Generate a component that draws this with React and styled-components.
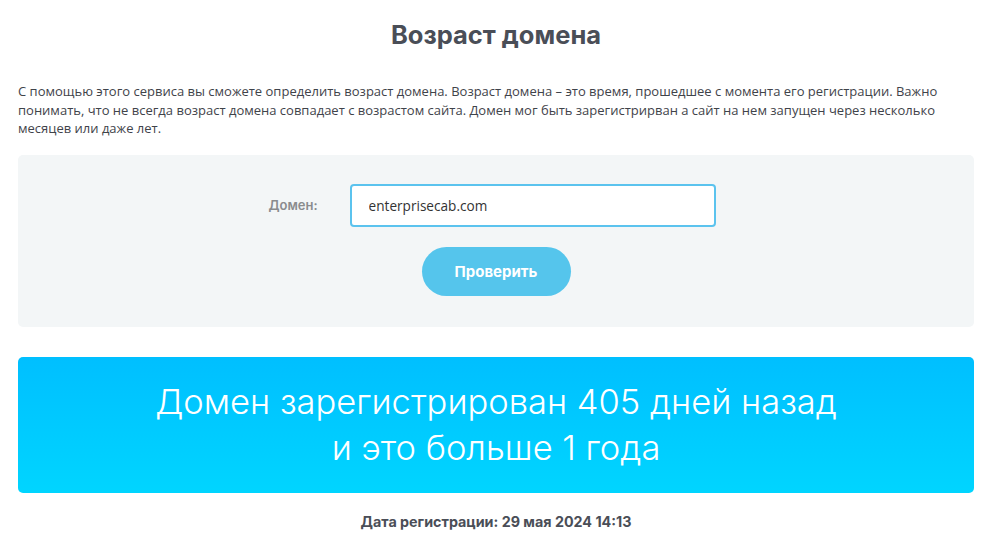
import React from "react";
import styled, { createGlobalStyle } from "styled-components";

const Global = createGlobalStyle`
  html, body { margin: 0; padding: 0; background: #ffffff; }
  body { font-family: "Open Sans", "Liberation Sans", sans-serif; }
`;

const Page = styled.div`
  padding: 0 19px 0 18px;
  display: flex;
  flex-direction: column;
`;

const Title = styled.h1`
  margin: 19px 0 0;
  height: 32px;
  line-height: 32px;
  text-align: center;
  font-family: Inter, "Open Sans", sans-serif;
  font-weight: 700;
  font-size: 25.5px;
  color: #4a4e57;
`;

const Intro = styled.p`
  margin: 31px 0 0;
  font-family: "Open Sans", sans-serif;
  font-size: 13px;
  line-height: 18.5px;
  font-weight: 500;
  color: #3f434a;
`;

const Panel = styled.section`
  margin-top: 17px;
  background: #f3f6f7;
  border-radius: 5px;
  height: 172px;
  box-sizing: border-box;
  padding-top: 29px;
  display: flex;
  flex-direction: column;
  align-items: center;
`;

const FieldRow = styled.div`
  display: flex;
  align-items: center;
  gap: 32px;
  margin-right: 8px;
`;

const Label = styled.label`
  font-family: Inter, "Open Sans", sans-serif;
  font-weight: 600;
  font-size: 13px;
  color: #8a8c8e;
`;

const Input = styled.input`
  box-sizing: border-box;
  width: 366px;
  height: 43px;
  border: 2px solid #5bc3ee;
  border-radius: 4px;
  background: #fff;
  padding: 0 17px;
  font-family: "Open Sans", sans-serif;
  font-size: 13.6px;
  color: #333;
  outline: none;
`;

const Button = styled.button`
  margin-top: 20px;
  width: 149px;
  height: 49px;
  border: none;
  border-radius: 25px;
  background: #55c5ec;
  color: #fff;
  font-family: Inter, "Open Sans", sans-serif;
  font-weight: 700;
  font-size: 15px;
  cursor: pointer;
`;

const Banner = styled.div`
  margin-top: 30px;
  height: 136px;
  border-radius: 5px;
  background: linear-gradient(180deg, #00bfff 0%, #00d5ff 100%);
  display: flex;
  flex-direction: column;
  align-items: center;
  justify-content: center;
  color: #fff;
  font-family: Inter, "Noto Sans", sans-serif;
  font-weight: 300;
  font-size: 34.5px;
  line-height: 46px;
  text-align: center;
`;

const RegDate = styled.div`
  margin-top: 20px;
  text-align: center;
  font-family: Inter, "Open Sans", sans-serif;
  font-weight: 700;
  font-size: 14.3px;
  color: #4a4e57;
`;

export default function App() {
  return (
    <>
      <Global />
      <Page>
        <Title>Возраст домена</Title>
        <Intro>
          С помощью этого сервиса вы сможете определить возраст домена. Возраст домена – это время, прошедшее с момента его регистрации. Важно понимать, что не всегда возраст домена совпадает с возрастом сайта. Домен мог быть зарегистрирван а сайт на нем запущен через несколько месяцев или даже лет.
        </Intro>
        <Panel>
          <FieldRow>
            <Label htmlFor="domain">Домен:</Label>
            <Input id="domain" defaultValue="enterprisecab.com" />
          </FieldRow>
          <Button>Проверить</Button>
        </Panel>
        <Banner>
          <div>Домен зарегистрирован 405 дней назад</div>
          <div>и это больше 1 года</div>
        </Banner>
        <RegDate>Дата регистрации: 29 мая 2024 14:13</RegDate>
      </Page>
    </>
  );
}
